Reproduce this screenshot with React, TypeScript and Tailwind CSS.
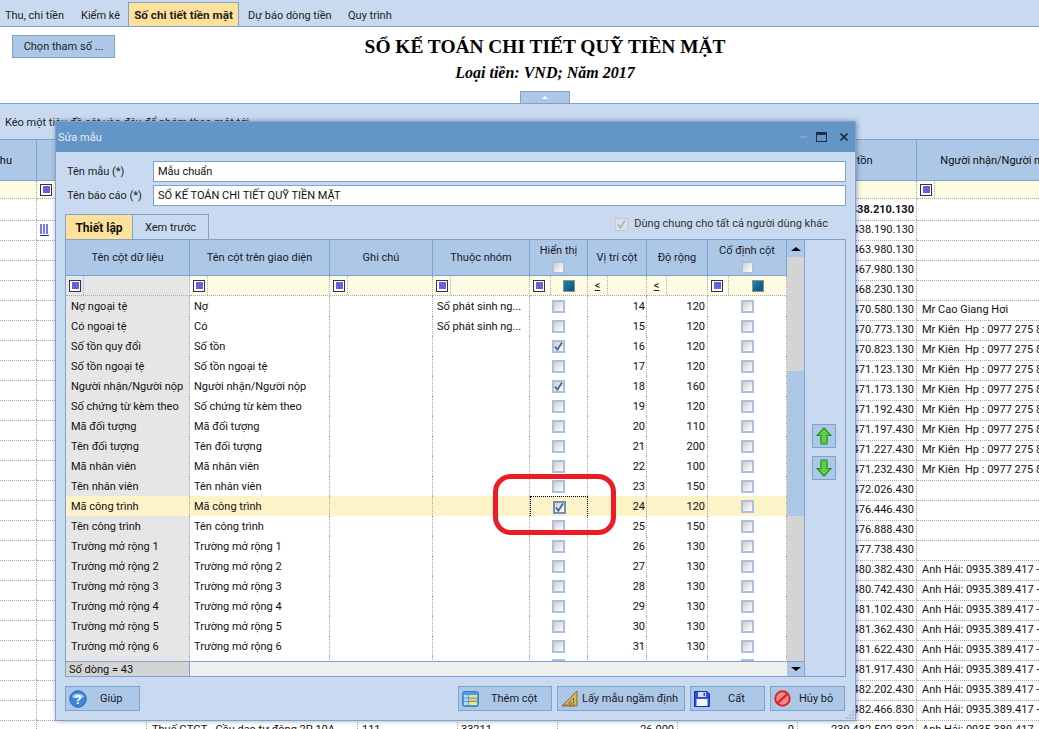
import type { ReactNode } from "react";

const kien = "Mr Kiên  Hp : 0977 275 888";
const hai = "Anh Hải: 0935.389.417 - Công trình";

const ledger: [string, string][] = [
  ["239.438.210.130", ""],
  ["239.438.190.130", ""],
  ["239.463.980.130", ""],
  ["239.467.980.130", ""],
  ["239.468.230.130", ""],
  ["239.470.580.130", "Mr Cao Giang Hơi"],
  ["239.470.773.130", kien],
  ["239.470.823.130", kien],
  ["239.471.123.130", kien],
  ["239.471.173.130", kien],
  ["239.471.192.430", kien],
  ["239.471.197.430", kien],
  ["239.471.227.430", kien],
  ["239.471.232.430", kien],
  ["239.472.026.430", ""],
  ["239.476.446.430", ""],
  ["239.476.888.430", ""],
  ["239.477.738.430", ""],
  ["239.480.382.430", hai],
  ["239.480.742.430", hai],
  ["239.481.102.430", hai],
  ["239.481.362.430", hai],
  ["239.481.622.430", hai],
  ["239.481.917.430", hai],
  ["239.482.202.430", hai],
  ["239.482.466.830", hai],
  ["239.482.502.830", hai],
];

interface Field {
  name: string;
  label: string;
  group?: string;
  shown?: boolean;
  pos: number;
  width: number;
  active?: boolean;
}

const fields: Field[] = [
  { name: "Nợ ngoại tệ", label: "Nợ", group: "Số phát sinh ng...", pos: 14, width: 120 },
  { name: "Có ngoại tệ", label: "Có", group: "Số phát sinh ng...", pos: 15, width: 120 },
  { name: "Số tồn quy đổi", label: "Số tồn", shown: true, pos: 16, width: 120 },
  { name: "Số tồn ngoại tệ", label: "Số tồn ngoại tệ", pos: 17, width: 120 },
  { name: "Người nhận/Người nộp", label: "Người nhận/Người nộp", shown: true, pos: 18, width: 160 },
  { name: "Số chứng từ kèm theo", label: "Số chứng từ kèm theo", pos: 19, width: 120 },
  { name: "Mã đối tượng", label: "Mã đối tượng", pos: 20, width: 110 },
  { name: "Tên đối tượng", label: "Tên đối tượng", pos: 21, width: 200 },
  { name: "Mã nhân viên", label: "Mã nhân viên", pos: 22, width: 100 },
  { name: "Tên nhân viên", label: "Tên nhân viên", pos: 23, width: 150 },
  { name: "Mã công trình", label: "Mã công trình", shown: true, pos: 24, width: 120, active: true },
  { name: "Tên công trình", label: "Tên công trình", pos: 25, width: 150 },
  { name: "Trường mở rộng 1", label: "Trường mở rộng 1", pos: 26, width: 130 },
  { name: "Trường mở rộng 2", label: "Trường mở rộng 2", pos: 27, width: 130 },
  { name: "Trường mở rộng 3", label: "Trường mở rộng 3", pos: 28, width: 130 },
  { name: "Trường mở rộng 4", label: "Trường mở rộng 4", pos: 29, width: 130 },
  { name: "Trường mở rộng 5", label: "Trường mở rộng 5", pos: 30, width: 130 },
  { name: "Trường mở rộng 6", label: "Trường mở rộng 6", pos: 31, width: 130 },
  { name: "", label: "", pos: 0, width: 0 },
];

const sheetCols = "grid grid-cols-[37px_110px_211px_100px_100px_120px_120px_119px_160px_120px]";
const formCols = "grid grid-cols-[124px_140px_103px_97px_58px_59px_61px_79px]";
const dotted = "border-b border-r border-dotted border-[#a9a9a9]";

function FilterIcon() {
  return (
    <span className="flex h-3 w-3 shrink-0 items-center justify-center border border-[#2c2c6e] bg-white">
      <span className="h-[7px] w-[7px] bg-[#6a62cf]" />
    </span>
  );
}

function FilterCell({ bg = "bg-[#fefde3]" }: { bg?: string }) {
  return (
    <div className={`flex h-full items-center ${bg} ${dotted}`}>
      <span className="flex h-full w-[18px] items-center justify-end border-r border-dotted border-[#a9a9a9] pr-[2px]">
        <FilterIcon />
      </span>
    </div>
  );
}

function LessEqCell() {
  return (
    <div className={`flex h-full items-center bg-[#fefde3] ${dotted}`}>
      <span className="flex h-full w-[20px] items-center justify-center border-r border-dotted border-[#a9a9a9] text-[11px] leading-none text-[#222] underline">
        &lt;
      </span>
    </div>
  );
}

function ToggleFilterCell() {
  return (
    <div className={`flex h-full items-center bg-[#fefde3] ${dotted}`}>
      <span className="flex h-full w-[21px] items-center justify-end border-r border-dotted border-[#a9a9a9] pr-[5px]">
        <FilterIcon />
      </span>
      <span className="flex flex-1 items-center justify-center">
        <span className="h-3 w-3 border border-[#8f8f8f] bg-gradient-to-br from-[#1b86b8] to-[#0d4f78]" />
      </span>
    </div>
  );
}

function Check({ on, strong }: { on?: boolean; strong?: boolean }) {
  return (
    <span
      className={`flex h-[13px] w-[13px] items-center justify-center border-2 bg-gradient-to-br from-[#cfcfcf] to-white ${
        strong ? "border-[#6f8fbd]" : "border-[#abc0df]"
      }`}
    >
      {on && (
        <svg width="11" height="11" viewBox="0 0 11 11" className="shrink-0">
          <path d="M2 5.5 L4.4 8.6 L9 1.6" fill="none" stroke="#4a6791" strokeWidth="1.8" />
        </svg>
      )}
    </span>
  );
}

function HeaderCell({ children }: { children: ReactNode }) {
  return (
    <div className="flex h-full flex-col items-center justify-center gap-[3px] border-r border-[#7ea3d0] bg-[#adc7e6] pt-[2px] text-center text-[#1a1a2a]">
      {children}
    </div>
  );
}

function SheetRow({ value, person, index }: { value: string; person: string; index: number }) {
  const last = index === ledger.length - 1;
  return (
    <div className={`${sheetCols} h-5 leading-[21px]`}>
      <div className={dotted} />
      <div className={`${dotted} flex items-center pl-[3px]`}>
        {index === 1 && (
          <svg width="9" height="12" viewBox="0 0 9 12">
            <path d="M1 0V10M4 0V10M7 0V10" stroke="#1d1de0" strokeWidth="1.2" />
            <path d="M0 11.5H9" stroke="#1d1de0" />
          </svg>
        )}
      </div>
      <div className={`${dotted} overflow-hidden whitespace-nowrap pl-[5px]`}>{last && "Thuế GTGT - Cầu dao tự động 2P 10A"}</div>
      <div className={`${dotted} pl-[4px]`}>{last && "111"}</div>
      <div className={`${dotted} pl-[3px]`}>{last && "33211"}</div>
      <div className={`${dotted} pr-[3px] text-right`}>{last && "26.000"}</div>
      <div className={`${dotted} pr-[3px] text-right`}>{last && "0"}</div>
      <div className={`${dotted} pr-[2px] text-right ${index === 0 ? "font-bold" : ""}`}>{value}</div>
      <div className={`${dotted} overflow-hidden whitespace-pre pl-[5px]`}>{person}</div>
      <div className={dotted} />
    </div>
  );
}

function FieldRow({ row }: { row: Field }) {
  const bg = row.active ? "bg-[#fdf3c9]" : "bg-white";
  return (
    <div className={`${formCols} h-5 leading-[21px]`}>
      <div className={`${dotted} truncate pl-[5px] ${row.active ? "bg-[#fdf3c9]" : "bg-[#e6e6e6]"}`}>{row.name}</div>
      <div className={`${dotted} ${bg} truncate pl-[4px]`}>{row.label}</div>
      <div className={`${dotted} ${bg}`} />
      <div className={`${dotted} ${bg} truncate pl-[4px]`}>{row.group}</div>
      <div
        className={`flex items-center justify-center ${bg} ${
          row.active ? "border border-dotted border-black" : dotted
        }`}
      >
        <Check on={row.shown} strong={row.active} />
      </div>
      <div className={`${dotted} ${bg} pr-[1px] text-right`}>{row.pos || ""}</div>
      <div className={`${dotted} ${bg} pr-[2px] text-right`}>{row.width || ""}</div>
      <div className={`flex items-center justify-center ${dotted} ${bg}`}>
        <Check />
      </div>
    </div>
  );
}

function HelpIcon() {
  return (
    <svg width="18" height="18" viewBox="0 0 18 18">
      <circle cx="9" cy="9" r="8.2" fill="#3f86d8" stroke="#2663ad" />
      <path d="M3 7a6.4 5 0 0 1 12 0a8 4 0 0 1-12 0" fill="#a8d0f5" />
      <text x="9" y="13.5" textAnchor="middle" fontSize="12" fontWeight="700" fill="#fff" fontFamily="Liberation Sans">
        ?
      </text>
    </svg>
  );
}

function TableIcon() {
  return (
    <svg width="17" height="16" viewBox="0 0 17 16">
      <rect x="0.5" y="0.5" width="16" height="15" rx="2" fill="#4d9be0" stroke="#3f7fc0" />
      <path d="M2 4h4v2.5H2zM2 7.5h4V10H2zM2 11h4v3H2z" fill="#b9dcf8" />
      <path d="M7 4h8v2.5H7z" fill="#f6e27a" />
      <path d="M7 7.5h8V10H7z" fill="#f3c94f" />
      <path d="M7 11h8v3H7z" fill="#f6e27a" />
    </svg>
  );
}

function RulerIcon() {
  return (
    <svg width="17" height="17" viewBox="0 0 17 17">
      <path d="M16 1V16H1Z" fill="#d9b45a" stroke="#8a6a25" />
      <path d="M12.5 8V13H7.5Z" fill="#adc7e6" stroke="#8a6a25" />
      <path d="M3 16V14.5M5 16V14M7 16V14.5M9 16V14M11 16V14.5M13 16V14" stroke="#6d521a" strokeWidth="0.7" />
    </svg>
  );
}

function SaveIcon() {
  return (
    <svg width="16" height="16" viewBox="0 0 16 16">
      <path d="M0.5 0.5H13L15.5 3V15.5H0.5Z" fill="#2b4fe0" stroke="#1a2fb0" />
      <rect x="4" y="1" width="8" height="5" fill="#d8dff0" />
      <rect x="9.5" y="1.7" width="1.6" height="3.4" fill="#2b4fe0" />
      <rect x="2.5" y="8" width="11" height="7" fill="#f4f6fb" />
    </svg>
  );
}

function CancelIcon() {
  return (
    <svg width="17" height="17" viewBox="0 0 17 17">
      <circle cx="8.5" cy="8.5" r="7.2" fill="#f08a8a" stroke="#d8262a" strokeWidth="2" />
      <path d="M3.8 12.8L13.2 4.2" stroke="#d8262a" strokeWidth="2.4" />
    </svg>
  );
}

function Action({ icon, label, w, gap }: { icon: ReactNode; label: string; w: string; gap: string }) {
  return (
    <button className={`flex h-[25px] items-center border border-[#7ea3d0] bg-[#adc7e6] pl-[3px] text-[#1a1a2a] ${w}`}>
      {icon}
      <span className={`whitespace-nowrap pt-[2px] ${gap}`}>{label}</span>
    </button>
  );
}

function MoveButton({ up }: { up?: boolean }) {
  return (
    <button className="flex h-6 w-6 items-center justify-center border border-[#7ea3d0] bg-[#adc7e6]">
      <svg width="16" height="18" viewBox="0 0 16 18" className={up ? "" : "rotate-180"}>
        <path d="M8 1L15 8.5H11V17H5V8.5H1Z" fill="#5fd04a" stroke="#1f8f22" strokeWidth="1.2" />
      </svg>
    </button>
  );
}

function Triangle({ up }: { up?: boolean }) {
  return (
    <span
      className={`h-0 w-0 border-x-[5px] border-x-transparent ${
        up ? "border-b-[4px] border-b-black" : "border-t-[4px] border-t-black"
      }`}
    />
  );
}

export default function App() {
  return (
    <div className="relative h-[729px] w-[1039px] overflow-hidden bg-white font-['Roboto',sans-serif] text-[11px] text-[#111]">
      <div className="w-[1090px]">
        {/* Module tabs */}
        <div className="flex h-[27px] items-end border-b border-[#7ea3d0] bg-[#c9daf0] pl-[5px] text-[#222]">
          <span className="h-[23px] w-[76px] leading-[25px]">Thu, chi tiền</span>
          <span className="h-[23px] w-[47px] leading-[25px]">Kiểm kê</span>
          <span className="h-[24px] w-[111px] border-x border-t border-[#7ea3d0] bg-[#ffe19b] text-center text-[11.7px] font-bold leading-[25px]">
            Số chi tiết tiền mặt
          </span>
          <span className="ml-[9px] h-[23px] w-[100px] leading-[25px]">Dự báo dòng tiền</span>
          <span className="h-[23px] leading-[25px]">Quy trình</span>
        </div>

        {/* Report heading */}
        <div className="flex h-[77px] flex-col border-b border-[#7ea3d0] bg-white">
          <div className="grid flex-1 grid-cols-[1fr_auto_1fr]">
            <div className="pl-3 pt-2">
              <button className="h-[23px] w-[103px] border border-[#7ea3d0] bg-[#adc7e6] pt-[2px] text-[#222]">Chọn tham số ...</button>
            </div>
            <div className="pt-[9px] text-center font-['Liberation_Serif',serif] font-bold text-black">
              <div className="text-[19.4px] leading-[22px]">SỔ KẾ TOÁN CHI TIẾT QUỸ TIỀN MẶT</div>
              <div className="mt-[5px] text-[16px] italic leading-[20px]">Loại tiền: VND; Năm 2017</div>
            </div>
            <div />
          </div>
          <div className="flex justify-center">
            <span className="flex h-3 w-[50px] items-center justify-center border-x border-t border-[#7ea3d0] bg-[#adc7e6]">
              <span className="h-0 w-0 border-x-[3px] border-b-[3px] border-x-transparent border-b-white" />
            </span>
          </div>
        </div>

        {/* Group-by bar */}
        <div className="h-9 border-b border-[#7ea3d0] bg-[#c9daf0] pl-[5px] pt-[11px] leading-[15px] text-[#222]">
          Kéo một tiêu đề cột vào đây để nhóm theo một tới
        </div>

        {/* Ledger behind the dialog */}
        <div className={`${sheetCols} h-[41px]`}>
          <div className="flex justify-end overflow-hidden whitespace-nowrap border-r border-b border-[#7ea3d0] bg-[#adc7e6] pr-[24px] leading-[41px]">
            Phiếu thu
          </div>
          {["", "", "", "", "", "", "Số tồn", "Người nhận/Người nộp", ""].map((t, i) => (
            <div key={i} className="truncate border-r border-b border-[#7ea3d0] bg-[#adc7e6] text-center leading-[41px]">
              {t}
            </div>
          ))}
        </div>
        <div className={`${sheetCols} h-[18px]`}>
          <div className={`bg-[#fefde3] ${dotted}`} />
          <div className={`flex items-center bg-[#fefde3] pl-[3px] ${dotted}`}>
            <FilterIcon />
          </div>
          <div className={`bg-[#fefde3] ${dotted}`} />
          <div className={`bg-[#fefde3] ${dotted}`} />
          <div className={`bg-[#fefde3] ${dotted}`} />
          <div className={`bg-[#fefde3] ${dotted}`} />
          <div className={`bg-[#fefde3] ${dotted}`} />
          <div className={`bg-[#fefde3] ${dotted}`} />
          <FilterCell />
          <div className={`bg-[#fefde3] ${dotted}`} />
        </div>
        {ledger.map(([value, person], i) => (
          <SheetRow key={i} index={i} value={value} person={person} />
        ))}
      </div>

      {/* Dialog */}
      <div className="absolute left-[55px] top-[121px] flex h-[600px] w-[801px] flex-col border border-[#7ea3d0] bg-[#c9daf0] shadow-[1px_0_5px_rgba(40,60,90,0.45)]">
        <div className="flex h-[30px] shrink-0 items-center justify-between bg-[#6395c6] pl-[2px] pr-[7px] text-[#e4edf7]">
          <span className="pt-[2px]">Sửa mẫu</span>
          <span className="flex items-center gap-[9px]">
            <span className="h-[2px] w-[7px] bg-[#86a3c2]" />
            <span className="h-[10px] w-[11px] border border-t-[3px] border-[#1f2f44]" />
            <svg width="8" height="8" viewBox="0 0 8 8" className="ml-1">
              <path d="M0.5 0.5L7.5 7.5M7.5 0.5L0.5 7.5" stroke="#1f2f44" strokeWidth="1.7" />
            </svg>
          </span>
        </div>

        <div className="flex flex-1 flex-col px-[9px] pt-[9px]">
          <div className="grid grid-cols-[86px_1fr] items-center gap-y-[3px] pl-[2px]">
            <label className="pt-[2px] text-[#222]">Tên mẫu (*)</label>
            <div className="h-[21px] border border-[#7ea3d0] bg-white pl-1 leading-[20px]">Mẫu chuẩn</div>
            <label className="pt-[2px] text-[#222]">Tên báo cáo (*)</label>
            <div className="h-[21px] border border-[#7ea3d0] bg-white pl-1 leading-[20px]">SỔ KẾ TOÁN CHI TIẾT QUỸ TIỀN MẶT</div>
          </div>

          <div className="mt-[7px] flex h-[26px] shrink-0 items-end justify-between">
            <div className="flex h-[25px]">
              <span className="w-[68px] border-x border-t border-[#7ea3d0] bg-[#ffe19b] text-center text-[12px] font-bold leading-[26px]">Thiết lập</span>
              <span className="w-[76px] border-r border-t border-[#7ea3d0] text-center leading-[26px] text-[#222]">Xem trước</span>
            </div>
            <div className="flex items-center gap-[6px] self-start pr-[18px] pt-[3px] text-[#333]">
              <span className="flex h-[13px] w-[13px] items-center justify-center border border-[#c8c8c8] bg-[#d8e2ef]">
                <svg width="11" height="11" viewBox="0 0 11 11">
                  <path d="M2 5.5 L4.4 8.6 L9 1.6" fill="none" stroke="#b3b3b3" strokeWidth="1.8" />
                </svg>
              </span>
              Dùng chung cho tất cả người dùng khác
            </div>
          </div>

          {/* Column settings */}
          <div className="flex h-[438px] shrink-0 border border-[#7ea3d0]">
            <div className="flex w-[721px] flex-col">
              <div className={`${formCols} h-9 shrink-0 border-b border-[#7ea3d0]`}>
                <HeaderCell>Tên cột dữ liệu</HeaderCell>
                <HeaderCell>Tên cột trên giao diện</HeaderCell>
                <HeaderCell>Ghi chú</HeaderCell>
                <HeaderCell>Thuộc nhóm</HeaderCell>
                <HeaderCell>
                  <span className="leading-[14px]">Hiển thị</span>
                  <Check />
                </HeaderCell>
                <HeaderCell>Vị trí cột</HeaderCell>
                <HeaderCell>Độ rộng</HeaderCell>
                <HeaderCell>
                  <span className="leading-[14px]">Cố định cột</span>
                  <Check />
                </HeaderCell>
              </div>
              <div className={`${formCols} h-5 shrink-0`}>
                <FilterCell bg="bg-[#e6e6e6]" />
                <FilterCell />
                <FilterCell />
                <FilterCell />
                <ToggleFilterCell />
                <LessEqCell />
                <LessEqCell />
                <ToggleFilterCell />
              </div>
              <div className="flex-1 overflow-hidden bg-white">
                {fields.map((row, i) => (
                  <FieldRow key={i} row={row} />
                ))}
              </div>
              <div className="flex h-[15px] shrink-0 border-t border-[#7ea3d0] bg-[#efefef] leading-[16px]">
                <span className="w-[124px] border-r border-[#7ea3d0] bg-[#d4d4d4] pl-[3px]">Số dòng = 43</span>
              </div>
            </div>

            <div className="flex w-[18px] flex-col border-r border-[#7ea3d0] bg-[#d4d4d4]">
              <span className="flex h-[17px] items-center justify-center bg-[#adc7e6]">
                <Triangle up />
              </span>
              <span className="h-[114px]" />
              <span className="h-[145px] bg-[#adc7e6]" />
              <span className="flex-1" />
              <span className="flex h-[15px] items-center justify-center border-t border-[#7ea3d0] bg-[#adc7e6]">
                <Triangle />
              </span>
            </div>

            <div className="flex flex-1 flex-col items-center gap-2 pr-[2px] pt-[184px]">
              <MoveButton up />
              <MoveButton />
            </div>
          </div>

          <div className="mt-[9px] flex items-center justify-between pr-[1px]">
            <Action icon={<HelpIcon />} label="Giúp" w="w-[75px]" gap="ml-[13px]" />
            <div className="flex gap-[5px]">
              <Action icon={<TableIcon />} label="Thêm cột" w="w-[94px]" gap="ml-[12px]" />
              <Action icon={<RulerIcon />} label="Lấy mẫu ngầm định" w="w-[128px]" gap="ml-1" />
              <Action icon={<SaveIcon />} label="Cất" w="w-[75px]" gap="ml-[18px]" />
              <Action icon={<CancelIcon />} label="Hủy bỏ" w="w-[75px]" gap="ml-2" />
            </div>
          </div>
        </div>

        {/* Resize grip */}
        <svg width="9" height="9" viewBox="0 0 9 9" className="absolute bottom-0 right-0">
          <path d="M6 0h2v2H6zM3 3h2v2H3zM6 3h2v2H6zM0 6h2v2H0zM3 6h2v2H3zM6 6h2v2H6z" fill="#a9bcd2" />
        </svg>
      </div>

      {/* Red hand-drawn highlight around the focused checkbox */}
      <div className="absolute left-[493px] top-[474px] h-[61px] w-[123px] rounded-[18px] border-[5px] border-[#ed1c24]" />
    </div>
  );
}
